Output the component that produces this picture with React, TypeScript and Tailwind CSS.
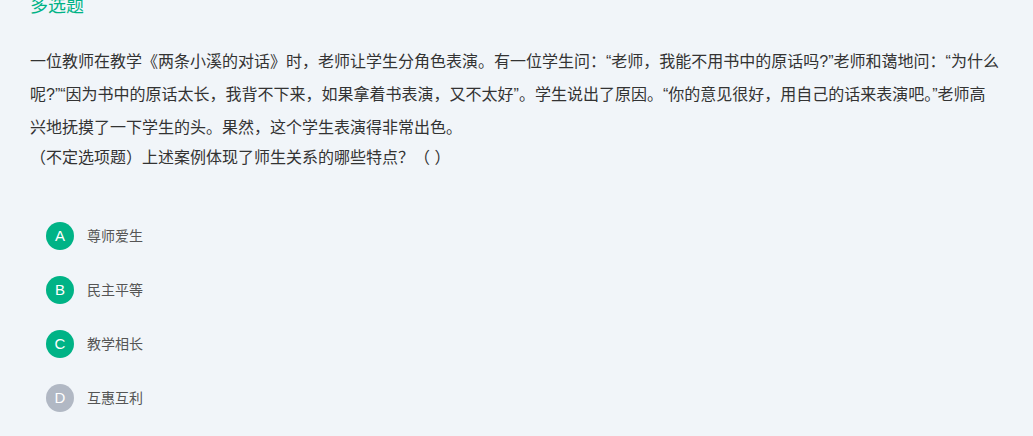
import React from "react";

const options = [
    { key: "A", text: "尊师爱生", active: true },
    { key: "B", text: "民主平等", active: true },
    { key: "C", text: "教学相长", active: true },
    { key: "D", text: "互惠互利", active: false },
];

const App = () => {
    return (
        <div
            className="min-h-screen w-full bg-[#f1f5f9] pl-[30px] pr-[32px] overflow-hidden"
            style={{ fontFamily: '"Liberation Sans", "Noto Sans CJK SC", sans-serif' }}
        >
            <div className="text-[18px] leading-[20px] text-[#00b386] -mt-[4px]">多选题</div>

            <div className="mt-[29px] text-[16px] leading-[33px] text-[#333]">
                一位教师在教学《两条小溪的对话》时，老师让学生分角色表演。有一位学生问：“老师，我能不用书中的原话吗?”老师和蔼地问：“为什么呢?”“因为书中的原话太长，我背不下来，如果拿着书表演，又不太好”。学生说出了原因。“你的意见很好，用自己的话来表演吧。”老师高兴地抚摸了一下学生的头。果然，这个学生表演得非常出色。
            </div>
            <div className="text-[16px] leading-[27px] text-[#333]">（不定选项题）上述案例体现了师生关系的哪些特点？（ ）</div>

            <div className="mt-[51px] flex flex-col gap-[26px] pl-[16px]">
                {options.map((o) => (
                    <div key={o.key} className="flex items-center gap-[13px]">
                        <div
                            className={
                                "w-[28px] h-[28px] rounded-full flex items-center justify-center text-white text-[15px] " +
                                (o.active ? "bg-[#00b386]" : "bg-[#b1b8c4]")
                            }
                        >
                            {o.key}
                        </div>
                        <span className="text-[14px] text-[#555]">{o.text}</span>
                    </div>
                ))}
            </div>
        </div>
    );
};

export default App;
